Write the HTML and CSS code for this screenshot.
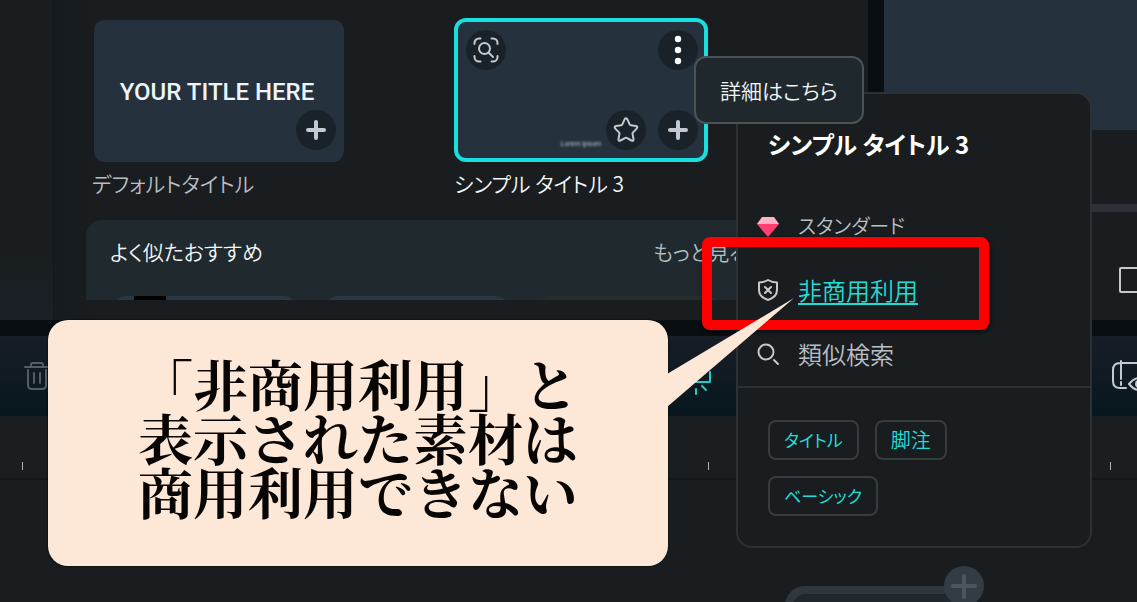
FILE: index.html
```html
<!DOCTYPE html>
<html lang="ja">
<head>
<meta charset="utf-8">
<meta name="viewport" content="width=device-width, initial-scale=1">
<title>シンプル タイトル 3</title>
<link rel="stylesheet" href="styles.css">
</head>
<body>
<div class="app">
  <main class="workspace">
    <aside class="sidebar"></aside>
    <section class="library">
      <div class="assets">
        <article class="asset">
          <div class="thumb">
            <span class="sample-title">YOUR TITLE HERE</span>
            <button class="round at-bottom" aria-label="追加"><svg viewBox="0 0 40 40"><path class="plus" d="M20 12v16M12 20h16"/></svg></button>
          </div>
          <h3 class="asset-name">デフォルトタイトル</h3>
        </article>
        <article class="asset selected">
          <div class="thumb">
            <span class="sample-caption">Lorem ipsum</span>
            <button class="round at-left" aria-label="類似検索"><svg viewBox="0 0 40 40"><path d="M8.500 14v-1a4.500 4.500 0 0 1 4.500-4.500h1.500M25.500 8.500H27a4.500 4.500 0 0 1 4.500 4.500v1M31.500 26v1a4.500 4.500 0 0 1-4.500 4.500h-1.500M14.500 31.500H13A4.500 4.500 0 0 1 8.500 27v-1"/><circle cx="18.500" cy="18.500" r="5.500"/><path d="m22.500 22.500 4.500 4.500"/></svg></button>
            <button class="round at-top" aria-label="メニュー"><svg viewBox="0 0 40 40"><g class="dots"><circle cx="20" cy="9" r="3.200"/><circle cx="20" cy="20" r="3.200"/><circle cx="20" cy="31" r="3.200"/></g></svg></button>
            <button class="round at-bottom second" aria-label="お気に入り"><svg viewBox="0 0 40 40"><path d="M18.700 9.200q1.300-2 2.600 0l2.500 5.400q.3.600 1 .7l5 .7q2.500.6.900 2.600l-3.900 4q-.4.500-.3 1.100l1 5.300q.2 2.400-2 1.500l-4.800-2.600q-.7-.4-1.400 0l-4.800 2.600q-2.200.9-2-1.500l1-5.300q.1-.6-.3-1.100l-3.900-4q-1.600-2 .9-2.600l5-.7q.7-.1 1-.7z"/></svg></button>
            <button class="round at-bottom" aria-label="追加"><svg viewBox="0 0 40 40"><path class="plus" d="M20 12v16M12 20h16"/></svg></button>
          </div>
          <h3 class="asset-name">シンプル タイトル 3</h3>
        </article>
      </div>
      <section class="similar">
        <header class="similar-head"><h2>よく似たおすすめ</h2><a href="#more">もっと見る</a></header>
        <div class="similar-row"><div class="peek first"></div><div class="peek"></div><div class="peek dim"></div></div>
      </section>
    </section>
    <section class="preview">
      <div class="screen"></div>
      <div class="seek"></div>
      <div class="player"><button class="plain" aria-label="停止"><svg width="40" height="30" viewBox="0 0 40 30"><rect x="3" y="3" width="25" height="24" rx="1"/></svg></button></div>
    </section>
  </main>

  <nav class="toolbar">
    <button class="plain" aria-label="削除"><svg class="muted" width="28" height="30" viewBox="0 0 28 30"><path d="M2 6h24M8 6V4q0-2 2-2h8q2 0 2 2v2M5 9v15q0 4 4 4h10q4 0 4-4V9M11 12v10M17 12v10"/></svg></button>
    <button class="plain beam" aria-label="効果"><svg width="28" height="40" viewBox="0 0 28 40"><path d="M4 26h21V16M11 33v5M17 30l4 4"/></svg></button>
    <button class="plain view" aria-label="表示"><svg width="48" height="34" viewBox="0 0 48 34"><path d="M13 4H11Q4 4 4 11v11q0 7 7 7h6M12 2v18M12 23v3M12 4h28"/><path d="M20 25q10-12 20 0-10 12-20 0z"/><circle cx="30" cy="25" r="3"/></svg></button>
  </nav>
  <div class="ruler"><i></i><i></i><i></i></div>
  <div class="tracks"></div>
</div>

<div class="drop-clip"><span class="drop-plus"><svg viewBox="0 0 40 40"><path d="M20 10v21M9 20h22"/></svg></span></div>

<section class="detail">
  <h2>シンプル タイトル 3</h2>
  <ul class="facts">
    <li><svg viewBox="0 0 24 24"><path fill="#ffb3c4" d="M6 3h12l5 7H1z"/><path fill="#ff3f70" d="M1 10h22L13 22q-1 1-2 0z"/></svg><span class="kana">スタンダード</span></li>
    <li><svg viewBox="0 0 24 24"><path class="line" d="M12 2q4 2.500 9 2.500V12q0 7-9 10-9-3-9-10V4.500Q8 4.500 12 2zM9 9l6 6M15 9l-6 6"/></svg><a href="#license">非商用利用</a></li>
    <li><svg viewBox="0 0 24 24"><circle class="line" cx="10" cy="10" r="7.500"/><path class="line" d="m18 18 4 4"/></svg><span>類似検索</span></li>
  </ul>
  <div class="tags"><button class="kana-tag">タイトル</button><button>脚注</button><button class="kana-tag">ベーシック</button></div>
</section>
<div class="tooltip" role="tooltip">詳細はこちら</div>
<div class="highlight"></div>
<div class="callout">
  <svg class="tail" viewBox="0 0 128 112" aria-hidden="true"><path d="M0 77 127 1 0 110z"/></svg>
  <p>「非商用利用」と<br>表示された素材は<br>商用利用できない</p>
</div>
</body>
</html>
```
FILE: styles.css
```css
* { box-sizing: border-box; }
body {
  margin: 0;
  min-height: 100vh;
  position: relative;
  overflow: hidden;
  background: #191d1f;
  color: #f3f6f7;
  font-family: "Noto Sans CJK JP", sans-serif;
  font-weight: 350;
  font-feature-settings: "palt";
}
h2, h3, p, ul { margin: 0; padding: 0; font-weight: inherit; }
button { font: inherit; font-feature-settings: inherit; color: inherit; padding: 0; cursor: pointer; }
svg { display: block; fill: none; stroke: #c3c9ce; stroke-width: 2; stroke-linecap: round; stroke-linejoin: round; }

.app { min-height: 100vh; display: grid; grid-template-rows: 320px 96px 64px 1fr; }
.workspace { display: grid; grid-template-columns: 54px 814px 1fr; }
.sidebar { background: linear-gradient(#191d1f 75%, #1a2027); border-right: 1px solid #12181b; }
.library { display: flex; flex-direction: column; padding: 18px 0 20px 32px; background: linear-gradient(90deg, #161b1f, #191d1f 48px); overflow: hidden; }
.assets { display: flex; gap: 108px; padding-left: 6px; height: 202px; }
.asset { width: 254px; }
.thumb {
  position: relative;
  height: 144px;
  display: flex;
  align-items: center;
  justify-content: center;
  border: 2px solid transparent;
  border-bottom-width: 0;
  border-radius: 12px;
  background: #25313c padding-box;
}
.selected .thumb { border: 4px solid #19dfdf; }
.sample-title { padding: 2px 4px 0 0; font: 500 24px/32px Roboto, sans-serif; color: #eef4fa; }
.sample-caption { position: absolute; right: 103px; bottom: 8px; font: 7px/12px "Liberation Sans", sans-serif; color: #c5ccd2; filter: blur(1px); }
.round { position: absolute; width: 40px; height: 40px; border: 0; border-radius: 50%; background: #192229; }
.at-bottom { right: 8px; bottom: 12px; }
.at-left { left: 8px; top: 8px; }
.at-top { right: 6px; top: 8px; }
.selected .at-bottom { right: 6px; bottom: 8px; }
.selected .second { right: 58px; }
.plus { stroke-width: 4; }
.dots { fill: #fff; stroke: none; }
.asset-name { font-size: 21px; line-height: 30px; margin-top: 6px; color: #b9bec2; }
.selected .asset-name { color: #f3f6f7; }
.similar { flex: 1; background: #20292d; border-radius: 16px 0 0 0; display: flex; flex-direction: column; justify-content: space-between; }
.similar-head { display: flex; justify-content: space-between; padding: 16px 120px 0 24px; font-size: 21px; line-height: 30px; }
.similar-head h2 { font-size: 21px; }
.similar-head a { color: #b5bdc1; text-decoration: none; }
.similar-row { display: flex; gap: 30px; padding-left: 28px; height: 4px; overflow: hidden; }
.peek { width: 182px; height: 40px; border-radius: 12px; background: #293743; flex: none; }
.first { background: linear-gradient(90deg, transparent 20px, #000 20px 52px, transparent 52px), #293743; }
.dim { background: #252d31; }

.preview { border-left: 16px solid #090e12; display: flex; flex-direction: column; }
.screen { height: 130px; background: #25313c; }
.seek { height: 8px; margin-top: 74px; background: #2d3037; }
.player { flex: 1; display: flex; align-items: flex-start; justify-content: flex-end; padding-top: 53px; overflow: hidden; }
.player .plain { margin-right: -20px; }
.plain { border: 0; background: none; flex: none; }

.toolbar { display: flex; align-items: center; padding-left: 23px; overflow: hidden; background: linear-gradient(#181d26, #07171d) padding-box; border-top: 16px solid #090e12; }
.muted { stroke: #555d64; }
.beam { margin-left: 634px; }
.beam svg { stroke: #25ccc7; }
.view { margin: 0 -20px 0 auto; }
.ruler { display: grid; grid-template-columns: 686px 402px 1fr; align-items: end; padding: 0 0 8px 22px; border-bottom: 2px solid #12171a; background: #1a1e21; }
.ruler i { width: 1px; height: 8px; background: #aab0b4; }

.drop-clip { position: absolute; left: 785px; top: 586px; width: 180px; height: 40px; border: 8px solid #30383e; border-radius: 20px 0 0 0; background: #20272d; }
.drop-plus { position: absolute; right: -27px; top: -28px; width: 40px; height: 40px; border-radius: 50%; background: #333c43; }
.drop-plus svg { stroke: #4b555d; stroke-width: 4; }

.detail { position: absolute; left: 736px; top: 92px; width: 356px; padding-bottom: 30px; border: 2px solid #2b3235; border-radius: 16px; background: #191d1f; }
.detail h2 { padding: 32px 30px 0; font-size: 24px; line-height: 36px; font-weight: 700; color: #fff; }
.facts { list-style: none; margin-top: 32px; padding: 0 18px; border-bottom: 2px solid #2b3033; }
.facts li { display: flex; align-items: center; gap: 18px; height: 64px; font-size: 24px; line-height: 32px; color: #b9bfc3; }
.facts svg { width: 24px; height: 24px; stroke: none; }
.facts .line { stroke: #c3c9ce; stroke-width: 2; }
.facts .kana { font-size: 20px; }
.facts a { color: #20ddd8; text-decoration-line: underline; text-decoration-thickness: 2px; text-underline-offset: 3px; }
.tags { display: flex; flex-wrap: wrap; gap: 16px; padding: 32px 100px 0 30px; }
.tags button { height: 40px; padding: 0 14px; border: 2px solid #353d40; border-radius: 8px; background: transparent; color: #20ddd8; font-size: 20px; line-height: 28px; }
.tags .kana-tag { font-size: 17px; font-weight: 400; }
.tooltip { position: absolute; left: 694px; top: 56px; padding: 16px 24px; border: 2px solid #4a5256; border-radius: 12px; background: #1f292d; font-size: 21px; line-height: 32px; white-space: nowrap; }
.highlight { position: absolute; left: 702px; top: 237px; width: 287px; height: 93px; border: 10px solid #f00; border-radius: 8px; box-shadow: 1px 2px 4px #0009; }
.callout { position: absolute; left: 48px; top: 320px; width: 620px; height: 246px; display: flex; align-items: center; justify-content: center; padding-bottom: 12px; border-radius: 20px; background: #fde7d6; box-shadow: 0 0 2px #000; color: #080604; }
.callout p { font: 700 55px/54px "Noto Serif CJK JP", "Noto Serif JP", serif; text-align: center; font-feature-settings: normal; white-space: nowrap; }
.tail { position: absolute; left: 619px; top: -23px; width: 128px; height: 112px; fill: #fde7d6; stroke: none; }
```
